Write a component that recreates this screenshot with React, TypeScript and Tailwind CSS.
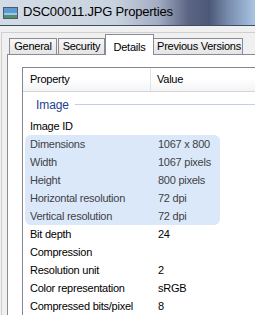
import React from "react";

const rows1 = [["Image ID", ""]];
const rowsHi = [
  ["Dimensions", "1067 x 800"],
  ["Width", "1067 pixels"],
  ["Height", "800 pixels"],
  ["Horizontal resolution", "72 dpi"],
  ["Vertical resolution", "72 dpi"],
];
const rows2 = [
  ["Bit depth", "24"],
  ["Compression", ""],
  ["Resolution unit", "2"],
  ["Color representation", "sRGB"],
  ["Compressed bits/pixel", "8"],
];

function Row({ p, v }: { p: string; v: string }) {
  return (
    <div className="flex h-[18px] items-center whitespace-nowrap">
      <div className="w-[128px] pl-[7px]">{p}</div>
      <div className="pl-[7px]">{v}</div>
    </div>
  );
}

export default function App() {
  return (
    <div className="w-[255px] h-[315px] overflow-hidden bg-[#f0f0f0] font-['Liberation_Sans',Arial,sans-serif] text-[11px] tracking-[-0.25px] text-black">
      {/* title bar */}
      <div className="h-[26px] border-b border-[#3f4d63] flex items-center pl-[3px] gap-[5px] bg-[linear-gradient(to_right,#d3dce6_0%,#c9d3df_45%,#a3acc2_62%,#5b6483_74%,#4c5877_82%,#7b8fb0_90%,#a9c4e2_100%)]">
        <svg width="15" height="12" viewBox="0 0 15 12" className="mt-[1px]">
          <rect x="0.5" y="0.5" width="14" height="11" fill="#e8eef2" stroke="#4d5a66" />
          <rect x="1" y="1" width="13" height="5" fill="#5b9bd5" />
          <rect x="1" y="6" width="13" height="2" fill="#9cc7e8" />
          <rect x="1" y="8" width="13" height="3" fill="#4f8f6a" />
        </svg>
        <span className="text-[13px] tracking-[-0.2px] mt-[-1px]">DSC00011.JPG Properties</span>
      </div>
      {/* body frame */}
      <div className="pt-[6px] pl-[1px]">
        <div className="border-l border-t border-[#cfcfcf] pt-[1px]">
          {/* tabs */}
          <div className="flex items-end pl-[7px] relative z-10">
            <div className="w-[48px] h-[16px] border border-b-0 border-[#898c95] bg-[linear-gradient(#f7f7f7,#e4e4e4)] flex items-center justify-center">General</div>
            <div className="ml-[1px] w-[47px] h-[16px] border border-b-0 border-[#898c95] bg-[linear-gradient(#f7f7f7,#e4e4e4)] flex items-center justify-center">Security</div>
            <div className="w-[49px] h-[21px] mb-[-1px] border border-b-0 border-[#898c95] bg-white flex items-start pt-[4px] justify-center">Details</div>
            <div className="w-[89px] h-[16px] border border-b-0 border-l-0 border-[#898c95] bg-[linear-gradient(#f7f7f7,#e4e4e4)] flex items-center justify-center pl-[2px]">Previous Versions</div>
          </div>
          {/* panel */}
          <div className="ml-[5px] border-l border-t border-[#898c95] bg-white pl-[14px] pt-[12px] h-[300px]">
            <div className="border-l border-t border-[#828790] bg-white h-[300px]">
              {/* header */}
              <div className="flex h-[24px] border-b border-[#d5d5d5] bg-[linear-gradient(#ffffff_0%,#ffffff_45%,#f3f4f6_100%)]">
                <div className="w-[128px] pl-[7px] border-r border-[#e1e3e6] flex items-center">Property</div>
                <div className="pl-[6px] flex items-center">Value</div>
              </div>
              {/* group */}
              <div className="h-[25px] flex items-center pl-[13px]">
                <span className="text-[#1f3f8e] text-[12px] tracking-[-0.1px]">Image</span>
                <div className="flex-1 h-px bg-[#c3d0e2] ml-[6px]" />
              </div>
              {rows1.map(([p, v]) => (
                <Row key={p} p={p} v={v} />
              ))}
              <div className="ml-[2px] w-[195px] rounded-[6px] bg-[#dbe8f9] text-[#3e4246]">
                {rowsHi.map(([p, v]) => (
                  <div key={p} className="flex h-[18px] items-center whitespace-nowrap">
                    <div className="w-[126px] pl-[5px]">{p}</div>
                    <div className="pl-[7px]">{v}</div>
                  </div>
                ))}
              </div>
              {rows2.map(([p, v]) => (
                <Row key={p} p={p} v={v} />
              ))}
            </div>
          </div>
        </div>
      </div>
    </div>
  );
}
